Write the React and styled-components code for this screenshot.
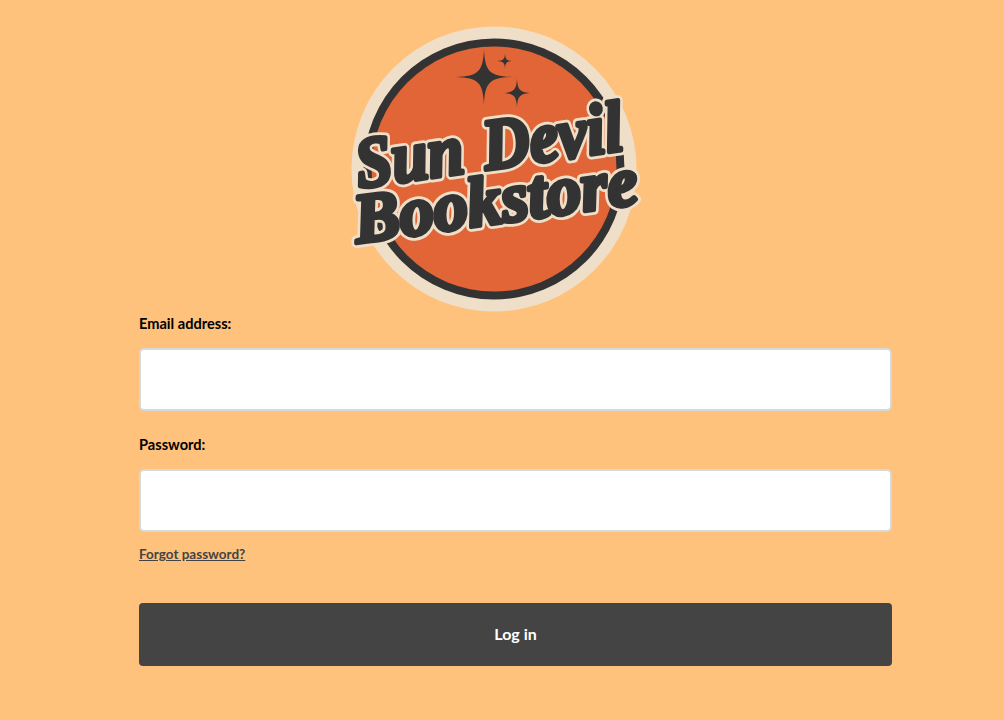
import React from "react";
import styled, { createGlobalStyle } from "styled-components";

const GlobalStyle = createGlobalStyle`
  html, body {
    margin: 0;
    background: #ffc27d;
    font-family: "Lato", "Noto Sans", sans-serif;
  }
`;

function Star({ x, y, size }) {
  const a = size * 0.03;
  const b = size * 0.2;
  return (
    <path
      d={`M${x} ${y - size}C${x + a} ${y - b} ${x + b} ${y - a} ${x + size} ${y}C${x + b} ${y + a} ${x + a} ${y + b} ${x} ${y + size}C${x - a} ${y + b} ${x - b} ${y + a} ${x - size} ${y}C${x - b} ${y - a} ${x - a} ${y - b} ${x} ${y - size}Z`}
      fill="#333333"
    />
  );
}

function LogoLine({ x, y, width, size, angle, children }) {
  const props = {
    transform: `translate(${x} ${y}) rotate(${angle})`,
    textLength: width,
    lengthAdjust: "spacingAndGlyphs",
    fontSize: size,
    fontFamily: '"Liberation Serif", serif',
    fontWeight: 700,
    fontStyle: "italic",
    strokeLinejoin: "round",
    wordSpacing: 4,
  };
  return (
    <>
      <text {...props} fill="#f0dfc8" stroke="#f0dfc8" strokeWidth="10">
        {children}
      </text>
      <text {...props} fill="#333333" stroke="#333333" strokeWidth="4.5">
        {children}
      </text>
    </>
  );
}

function Logo() {
  return (
    <LogoImage viewBox="0 0 292 292" role="img" aria-label="Sun Devil Bookstore">
      <circle cx="144" cy="144" r="142.5" fill="#f0dfc8" />
      <circle cx="144" cy="144" r="130.5" fill="#333333" />
      <circle cx="144" cy="144" r="122.5" fill="#e26537" />
      <Star x={134} y={52} size={28} />
      <Star x={167} y={68} size={15} />
      <Star x={155} y={36} size={8} />
      <LogoLine x={9} y={163} width={269} size={72} angle={-8.2}>
        Sun Devil
      </LogoLine>
      <LogoLine x={7} y={218} width={286} size={70} angle={-8}>
        Bookstore
      </LogoLine>
    </LogoImage>
  );
}

export default function App() {
  return (
    <Page>
      <GlobalStyle />
      <Logo />
      <Form onSubmit={(e) => e.preventDefault()}>
        <Field>
          <Label htmlFor="email">Email address:</Label>
          <Input id="email" type="email" />
        </Field>
        <Field>
          <Label htmlFor="password">Password:</Label>
          <Input id="password" type="password" />
        </Field>
        <ForgotLink href="#">Forgot password?</ForgotLink>
        <Button type="submit">Log in</Button>
      </Form>
    </Page>
  );
}

const Page = styled.div`
  height: 720px;
  overflow: hidden;
  padding: 25px 112px 0 139px;
  box-sizing: border-box;
`;

const LogoImage = styled.svg`
  display: block;
  width: 292px;
  height: 292px;
  margin-left: 211px;
  overflow: visible;
`;

const Form = styled.form`
  display: flex;
  flex-direction: column;
  margin-top: -3px;
`;

const Field = styled.div`
  display: flex;
  flex-direction: column;
  margin-bottom: 24px;

  &:nth-child(2) {
    margin-bottom: 12px;
  }
`;

const Label = styled.label`
  height: 20px;
  margin: 0 0 14px;
  font-size: 14.6px;
  line-height: 20px;
  font-weight: 700;
  color: #000;
`;

const Input = styled.input`
  box-sizing: border-box;
  height: 63px;
  padding: 0 12px;
  background: #fff;
  border: 2px solid #d8d8d8;
  border-radius: 5px;
`;

const ForgotLink = styled.a`
  align-self: flex-start;
  font-size: 13.5px;
  line-height: 20px;
  font-weight: 700;
  color: #444;
  text-decoration: underline;
`;

const Button = styled.button`
  height: 63px;
  margin-top: 39px;
  padding: 0 0 3px;
  background: #444;
  color: #fff;
  border: none;
  border-radius: 4px;
  font-family: inherit;
  font-size: 16px;
  font-weight: 700;
  cursor: pointer;
`;
